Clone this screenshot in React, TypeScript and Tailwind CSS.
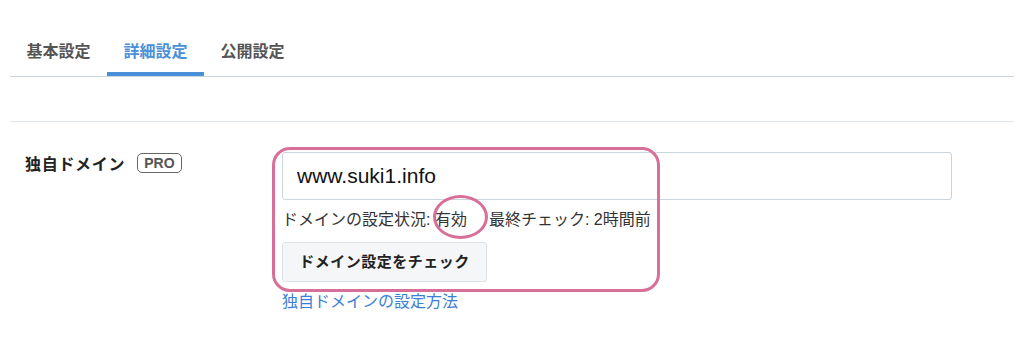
const font = { fontFamily: '"Liberation Sans", "Noto Sans CJK JP", sans-serif' };

const tabs = ['基本設定', '詳細設定', '公開設定'];

export default function App() {
  const active = 1;

  return (
    <div className="h-[352px] w-[1024px] bg-white px-[10px] text-[#333]" style={font}>
      <nav className="flex border-b border-[#c9d5df] pt-[33px]">
        {tabs.map((tab, i) => (
          <button
            key={tab}
            type="button"
            className={
              i === active
                ? 'w-[97px] border-b-4 border-[#4a90d9] pt-2 pb-[9px] text-[16px] leading-[22px] font-bold text-[#4a90d9]'
                : 'w-[97px] border-b-4 border-transparent pt-2 pb-[9px] text-[16px] leading-[22px] font-bold text-[#555]'
            }
          >
            {tab}
          </button>
        ))}
      </nav>

      <div className="mt-[44px] border-t border-[#e3e8ed] pt-[30px] pl-[15px]">
        <div className="flex">
          <div className="flex w-[257px] items-start pt-px">
            <span className="text-[16px] leading-[24px] font-bold tracking-[0.7px] text-[#222]">独自ドメイン</span>
            <span className="ml-[12px] rounded-[5px] border-[1.5px] border-[#666] px-[6px] text-[14px] leading-[18px] font-bold text-[#555]">
              PRO
            </span>
          </div>

          <div className="relative w-[670px]">
            <input
              readOnly
              value="www.suki1.info"
              className="h-[48px] w-full rounded-[3px] border border-[#ccd5dc] px-[14px] text-[21px] text-[#111] outline-none"
              style={font}
            />
            <p className="mt-2 text-[16px] leading-[24px] text-[#333]">
              ドメインの設定状況: 有効<span className="ml-[22px]">最終チェック: 2時間前</span>
            </p>
            <button
              type="button"
              className="mt-[10px] h-[40px] w-[205px] rounded-[3px] border border-[#dde3e8] bg-[#f4f6f8] text-[15px] font-bold tracking-[0.5px] text-[#222]"
            >
              ドメイン設定をチェック
            </button>
            <a className="mt-2 block text-[16px] leading-[24px] text-[#3d7fd6]" href="#">
              独自ドメインの設定方法
            </a>

            <div className="pointer-events-none absolute top-[-5px] left-[-10px] h-[145px] w-[388px] rounded-[18px] border-[3px] border-[#d86f99]" />
            <div className="pointer-events-none absolute top-[43px] left-[151px] h-[44px] w-[55px] rounded-[50%] border-[3px] border-[#d86f99]" />
          </div>
        </div>
      </div>
    </div>
  );
}
